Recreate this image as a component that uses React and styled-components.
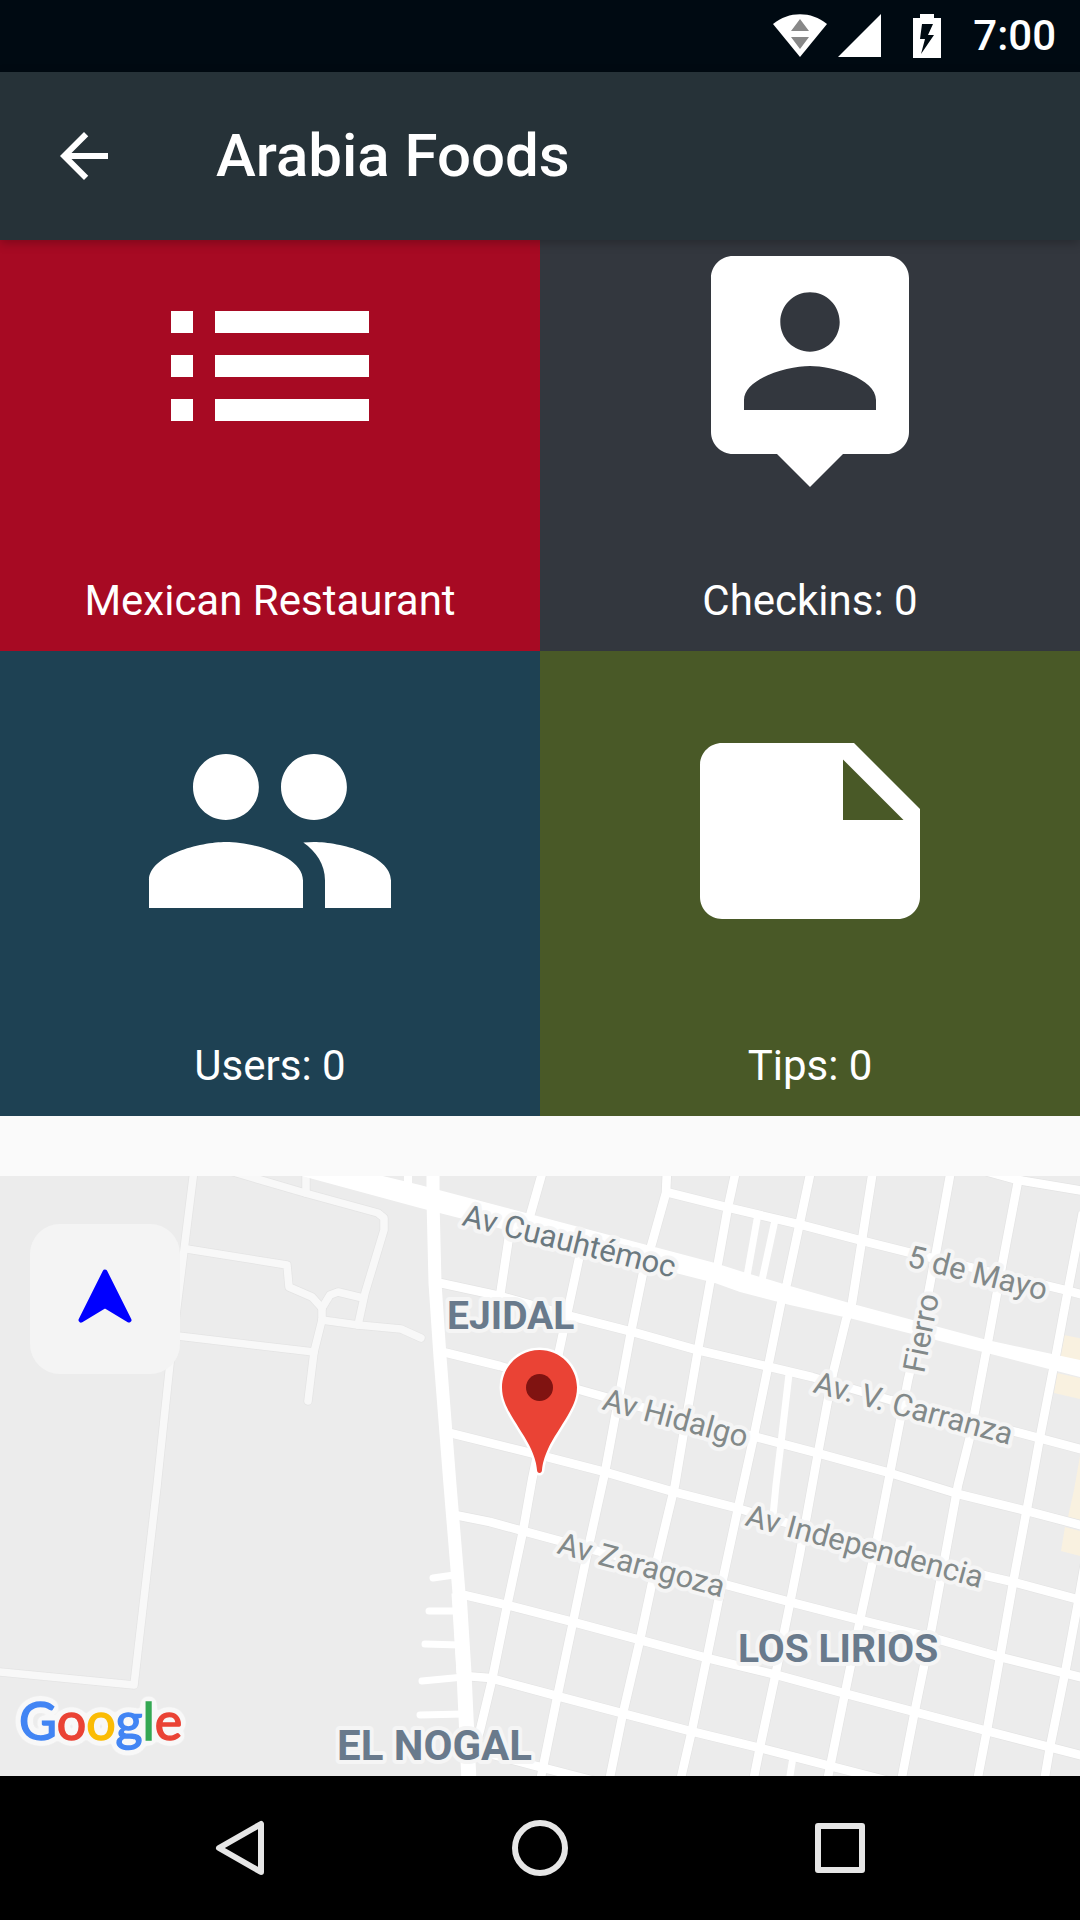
import React from "react";
import styled, { createGlobalStyle } from "styled-components";

const GlobalStyle = createGlobalStyle`
  *, *::before, *::after { box-sizing: border-box; }
  body { margin: 0; background: #fafafa; }
  button { border: 0; padding: 0; background: none; color: inherit; font: inherit; cursor: pointer; }
  svg { display: block; }
`;

const Screen = styled.div`
  min-height: 100vh;
  display: flex;
  flex-direction: column;
  background: #fafafa;
  color: #fff;
  font-family: Roboto, "Noto Sans", sans-serif;
`;

const StatusBar = styled.div`
  display: flex;
  justify-content: flex-end;
  align-items: center;
  gap: 32px;
  height: 72px;
  padding: 0 24px;
  background: #000a12;
`;

const SignalGroup = styled.div`
  display: flex;
  gap: 11px;
`;

const Clock = styled.time`
  font-size: 42px;
  line-height: 48px;
  font-weight: 500;
`;

const AppBar = styled.header`
  position: relative;
  z-index: 1;
  display: flex;
  align-items: center;
  gap: 96px;
  height: 168px;
  padding: 0 48px;
  background: #263238;
  box-shadow: 0 3px 10px rgba(0, 0, 0, 0.25);
`;

const Title = styled.h1`
  margin: 0;
  font-size: 60px;
  line-height: 72px;
  font-weight: 500;
`;

const Content = styled.main`
  flex: 1;
  display: flex;
  flex-direction: column;
  gap: 60px;
  overflow: hidden;
`;

/* The list is scrolled a little way up under the app bar. */
const TileGrid = styled.section`
  display: grid;
  grid-template-columns: 1fr 1fr;
  margin-top: -54px;
`;

const Tile = styled.div`
  display: flex;
  flex-direction: column;
  align-items: center;
  gap: 78px;
  padding: 48px 24px 26px;
  background: ${(p) => p.$color};
`;

const TileIcon = styled.svg`
  width: 264px;
  height: 264px;
  fill: #fff;
`;

const TileLabel = styled.span`
  font-size: 42px;
  line-height: 49px;
`;

const MapPanel = styled.section`
  position: relative;
  flex: 1;
  display: flex;
  min-height: 600px;
  overflow: hidden;
`;

const MapCanvas = styled.svg`
  flex: 1;
  width: 100%;
  background: #ececec;
`;

const Roads = styled.g`
  fill: none;
  stroke: ${(p) => p.$color};
  stroke-width: ${(p) => p.$width}px;
  stroke-linecap: ${(p) => p.$cap || "butt"};
  stroke-linejoin: round;
`;

const StreetLabel = styled.text`
  font-size: 31px;
  fill: ${(p) => (p.$major ? "#6b7980" : "#828989")};
  stroke: #f5f5f5;
  stroke-width: 8px;
  stroke-linejoin: round;
  paint-order: stroke;
`;

const AreaLabel = styled.text`
  font-size: ${(p) => p.$size}px;
  font-weight: 700;
  fill: #697a8c;
  stroke: #f5f5f5;
  stroke-width: 8px;
  stroke-linejoin: round;
  paint-order: stroke;
`;

const LogoText = styled.text`
  font-family: Lato, sans-serif;
  font-size: 52px;
  font-weight: 400;
  stroke-width: 1.5px;
`;

const LocateButton = styled.button`
  position: absolute;
  top: 48px;
  left: 30px;
  display: grid;
  place-items: center;
  width: 150px;
  height: 150px;
  padding-bottom: 6px;
  border-radius: 30px;
  background: #f4f4f4;
`;

const NavBar = styled.nav`
  display: grid;
  grid-template-columns: repeat(3, 1fr);
  height: 144px;
  padding: 0 90px;
  background: #000;
`;

const NavButton = styled.button`
  display: grid;
  place-items: center;
`;

const tiles = [
  {
    label: "Mexican Restaurant",
    color: "#a70a23",
    path: "M3 13h2v-2H3v2zm0 4h2v-2H3v2zm0-8h2V7H3v2zm4 4h14v-2H7v2zm0 4h14v-2H7v2zM7 7v2h14V7H7z",
  },
  {
    label: "Checkins: 0",
    color: "#33373e",
    path: "M19 2H5c-1.110 0-2 .9-2 2v14c0 1.100.890 2 2 2h4l3 3 3-3h4c1.100 0 2-.9 2-2V4c0-1.100-.9-2-2-2zm-7 3.300c1.490 0 2.700 1.210 2.700 2.700 0 1.490-1.210 2.700-2.700 2.700-1.490 0-2.700-1.210-2.700-2.700 0-1.490 1.210-2.700 2.700-2.700zM18 16H6v-.9c0-2 4-3.100 6-3.100s6 1.100 6 3.100v.9z",
  },
  {
    label: "Users: 0",
    color: "#1e4153",
    path: "M16 11c1.660 0 2.990-1.340 2.990-3S17.660 5 16 5c-1.660 0-3 1.340-3 3s1.340 3 3 3zm-8 0c1.660 0 2.990-1.340 2.990-3S9.660 5 8 5C6.340 5 5 6.340 5 8s1.340 3 3 3zm0 2c-2.330 0-7 1.170-7 3.500V19h14v-2.500c0-2.330-4.670-3.500-7-3.500zm8 0c-.290 0-.620.020-.970.050 1.160.840 1.970 1.970 1.970 3.450V19h6v-2.500c0-2.330-4.670-3.500-7-3.500z",
  },
  {
    label: "Tips: 0",
    color: "#495927",
    path: "M16 4H4c-1.100 0-2 .9-2 2v12.010c0 1.100.9 1.990 2 1.990h16c1.100 0 2-.9 2-2v-8l-6-6zm-1 7V5.500l5.500 5.500H15z",
  },
];

const lanes = [
  "M194 1170L184 1250L170 1363L157 1486L134 1685L0 1672",
  "M220 1168L305 1193L378 1213L384 1218V1230L365 1293L358 1325",
  "M306 1170V1193",
  "M187 1249L287 1265L289 1287L312 1297L322 1308V1320L314 1352L308 1401",
  "M322 1308L330 1295L338 1292L363 1298",
  "M322 1320L358 1325L401 1329L421 1338",
  "M178 1336L314 1352",
];

const streets = [
  "M666 1192L730 1208L802 1225L863 1241L907 1252L1065 1290L1084 1295",
  "M985 1171L1018 1180L1084 1191",
  "M440 1283L500 1296L570 1316L633 1332L697 1350L770 1367L812 1377L890 1400L1020 1433L1084 1450",
  "M443 1352L500 1366L580 1390L633 1405L760 1438L817 1453L890 1473L958 1494L1027 1511L1084 1526",
  "M450 1433L543 1456L605 1472L674 1492L737 1508L780 1521L987 1576L1013 1582L1084 1601",
  "M455 1515L490 1522L523 1531L560 1541L727 1585L790 1602L860 1620L937 1639L1000 1657L1084 1678",
  "M460 1594L507 1605L573 1622L640 1640L707 1658L777 1675L843 1693L915 1712L987 1731L1084 1756",
  "M465 1676L490 1678L557 1696L625 1714L690 1731L760 1748L830 1766L900 1784",
  "M490 1754L540 1767L610 1785",
  "M408 1170V1194",
  "M543 1170L526 1230",
  "M510 1230L500 1296",
  "M583 1240L560 1347L532 1480L523 1531L507 1606L492 1680L480 1730L474 1750",
  "M667 1170L666 1193L652 1243L643 1273L630 1337L605 1472L590 1540L573 1622L558 1693L540 1782",
  "M736 1170L728 1207L718 1263L710 1283L698 1350L683 1437L675 1485L657 1560L640 1640L623 1713L609 1782",
  "M811 1170L800 1222L787 1283L781 1303L768 1367L753 1440L737 1513L722 1583L707 1657L692 1730L680 1782",
  "M873 1170L862 1240L852 1303L846 1320L833 1373L818 1453L800 1553L790 1603L775 1677L760 1747L753 1782",
  "M951 1170L937 1247L927 1300L908 1380L890 1473L873 1560L860 1620L845 1693L827 1782",
  "M1019 1176L1003 1260L987 1347L970 1437L958 1485L943 1567L930 1637L915 1710L901 1782",
  "M1083 1212L1068 1290L1055 1360L1040 1437L1031 1487L1013 1583L1000 1657L987 1730L977 1782",
  "M1085 1563L1078 1603L1065 1673L1050 1747L1044 1782",
];

const alleys = [
  "M758 1214L747 1276",
  "M775 1220L762 1280",
  "M789 1374L781 1443L776 1485L773 1516",
  "M793 1757L789 1782",
];

const stubs = [
  "M433 1578L454 1575",
  "M429 1611H457",
  "M425 1644L460 1645",
  "M422 1681L464 1677",
  "M420 1715L464 1714",
];

const streetLabels = [
  { text: "Av Cuauhtémoc", x: 461, y: 1225, angle: 14, major: true },
  { text: "5 de Mayo", x: 906, y: 1266, angle: 14 },
  { text: "Fierro", x: 924, y: 1374, angle: -79 },
  { text: "Av Hidalgo", x: 601, y: 1409, angle: 15 },
  { text: "Av. V. Carranza", x: 812, y: 1392, angle: 15 },
  { text: "Av Independencia", x: 744, y: 1525, angle: 15 },
  { text: "Av Zaragoza", x: 556, y: 1553, angle: 15 },
];

const areaLabels = [
  { text: "EJIDAL", x: 447, y: 1329, size: 39 },
  { text: "LOS LIRIOS", x: 738, y: 1662, size: 39 },
  { text: "EL NOGAL", x: 337, y: 1760, size: 42 },
];

const logoLetters = [
  ["G", "#4285f4"],
  ["o", "#ea4335"],
  ["o", "#fbbc05"],
  ["g", "#4285f4"],
  ["l", "#34a853"],
  ["e", "#ea4335"],
];

const drawAll = (paths) => paths.map((d) => <path key={d} d={d} />);

function StatusIcons() {
  return (
    <>
      <SignalGroup>
        <svg width="54" height="44" viewBox="0 0 54 44" aria-label="Wi-Fi" role="img">
          <path fill="#fff" d="M0 10C16-3 38-3 54 10L27 43z" />
          <path fill="#888" d="M27 5L36 17H18zM18 23H36L27 35z" />
        </svg>
        <svg width="43" height="44" viewBox="0 0 43 44" aria-label="Signal" role="img">
          <path fill="#fff" d="M43 0V43H0z" />
        </svg>
      </SignalGroup>
      <svg width="28" height="44" viewBox="0 0 28 44" aria-label="Charging" role="img">
        <path
          fill="#fff"
          fillRule="evenodd"
          d="M7 0H21V4H28V44H0V4H7zM9 10L7 25H12L8 40L21 21H15L20 10z"
        />
      </svg>
    </>
  );
}

function CityMap() {
  return (
    <MapCanvas viewBox="0 1176 1080 600" preserveAspectRatio="xMidYMid slice" role="img" aria-label="Map">
      <defs>
        <filter id="logoHalo" x="-20%" y="-30%" width="140%" height="160%" colorInterpolationFilters="sRGB">
          <feGaussianBlur in="SourceAlpha" stdDeviation="3" />
          <feComponentTransfer result="mask">
            <feFuncA type="linear" slope="24" intercept="-0.6" />
          </feComponentTransfer>
          <feFlood floodColor="#f8f8f8" />
          <feComposite in2="mask" operator="in" />
          <feMerge>
            <feMergeNode />
            <feMergeNode in="SourceGraphic" />
          </feMerge>
        </filter>
      </defs>
      <g fill="#f9f1e0">
        <path d="M1064 1335L1084 1339V1364L1060 1358z" />
        <path d="M1057 1373L1084 1379V1400L1054 1393z" />
        <path d="M1080 1456L1084 1456V1521L1068 1517L1074 1490z" />
        <path d="M1065 1527L1084 1532V1557L1061 1551z" />
      </g>
      <Roads $color="#e4e4e4" $width={9} $cap="round">{drawAll(lanes)}</Roads>
      <Roads $color="#f8f8f8" $width={7.5} $cap="round">{drawAll(lanes)}</Roads>
      <Roads $color="#e4e4e4" $width={10}>{drawAll(streets)}</Roads>
      <Roads $color="#fff" $width={8.6}>{drawAll(streets)}</Roads>
      <Roads $color="#fff" $width={7}>{drawAll(alleys)}</Roads>
      <Roads $color="#fff" $width={7} $cap="round">{drawAll(stubs)}</Roads>
      <Roads $color="#fff" $width={13}>
        <path d="M433 1170V1200L435 1283L440 1357L450 1485L459 1593L463 1673" />
      </Roads>
      <Roads $color="#fff" $width={15}>
        <path d="M459 1593L464 1673L469 1782" />
      </Roads>
      <path
        fill="#fff"
        d="M358 1170L420 1185L715 1263L740 1271L790 1286L853 1304L987 1340L1080 1360V1377L987 1353L853 1319L790 1305L740 1292L715 1283L420 1208L313 1179L280 1170z"
      />

      {streetLabels.map((l) => (
        <StreetLabel key={l.text} $major={l.major} transform={`translate(${l.x} ${l.y}) rotate(${l.angle})`}>
          {l.text}
        </StreetLabel>
      ))}
      {areaLabels.map((l) => (
        <AreaLabel key={l.text} $size={l.size} x={l.x} y={l.y}>
          {l.text}
        </AreaLabel>
      ))}

      <path
        fill="#ea4335"
        stroke="#fff"
        strokeWidth="5"
        paintOrder="stroke"
        d="M539.500 1350C518.700 1350 502 1366.800 502 1387.500C502 1399 507 1408 511 1415C518 1427 526 1438 531 1449C535 1458 536.500 1464 537 1470C537 1474 542 1474 542 1470C542.500 1464 544 1458 548 1449C553 1438 561 1427 568 1415C572 1408 577 1399 577 1387.500C577 1366.800 560.300 1350 539.500 1350z"
      />
      <circle cx="539.500" cy="1387.500" r="13.500" fill="#801311" />

      <LogoText x="19" y="1740" filter="url(#logoHalo)">
        {logoLetters.map(([letter, color], i) => (
          <tspan key={i} fill={color} stroke={color}>
            {letter}
          </tspan>
        ))}
      </LogoText>
    </MapCanvas>
  );
}

export default function App() {
  return (
    <>
      <GlobalStyle />
      <Screen>
        <StatusBar>
          <StatusIcons />
          <Clock>7:00</Clock>
        </StatusBar>
        <AppBar>
          <button type="button" aria-label="Back">
            <svg width="72" height="72" viewBox="0 0 24 24" fill="#fff">
              <path d="M20 11H7.830l5.590-5.590L12 4l-8 8 8 8 1.410-1.410L7.830 13H20v-2z" />
            </svg>
          </button>
          <Title>Arabia Foods</Title>
        </AppBar>
        <Content>
          <TileGrid>
            {tiles.map((tile) => (
              <Tile key={tile.label} $color={tile.color}>
                <TileIcon viewBox="0 0 24 24" aria-hidden="true">
                  <path d={tile.path} />
                </TileIcon>
                <TileLabel>{tile.label}</TileLabel>
              </Tile>
            ))}
          </TileGrid>
          <MapPanel>
            <CityMap />
            <LocateButton type="button" aria-label="Navigate">
              <svg width="54" height="54" viewBox="0 0 54 54">
                <path
                  d="M27 3L51 51L27 36.500L3 51z"
                  fill="#00f"
                  stroke="#00f"
                  strokeWidth="5"
                  strokeLinejoin="round"
                />
              </svg>
            </LocateButton>
          </MapPanel>
        </Content>
        <NavBar>
          <NavButton type="button" aria-label="Back">
            <svg width="50" height="56" viewBox="0 0 50 56" fill="none" stroke="#e6e6e6" strokeWidth="6" strokeLinejoin="round">
              <path d="M46 4V52L4 28z" />
            </svg>
          </NavButton>
          <NavButton type="button" aria-label="Home">
            <svg width="56" height="56" viewBox="0 0 56 56" fill="none" stroke="#e6e6e6" strokeWidth="6">
              <circle cx="28" cy="28" r="25" />
            </svg>
          </NavButton>
          <NavButton type="button" aria-label="Overview">
            <svg width="50" height="50" viewBox="0 0 50 50" fill="none" stroke="#e6e6e6" strokeWidth="6" strokeLinejoin="round">
              <rect x="3" y="3" width="44" height="44" />
            </svg>
          </NavButton>
        </NavBar>
      </Screen>
    </>
  );
}
